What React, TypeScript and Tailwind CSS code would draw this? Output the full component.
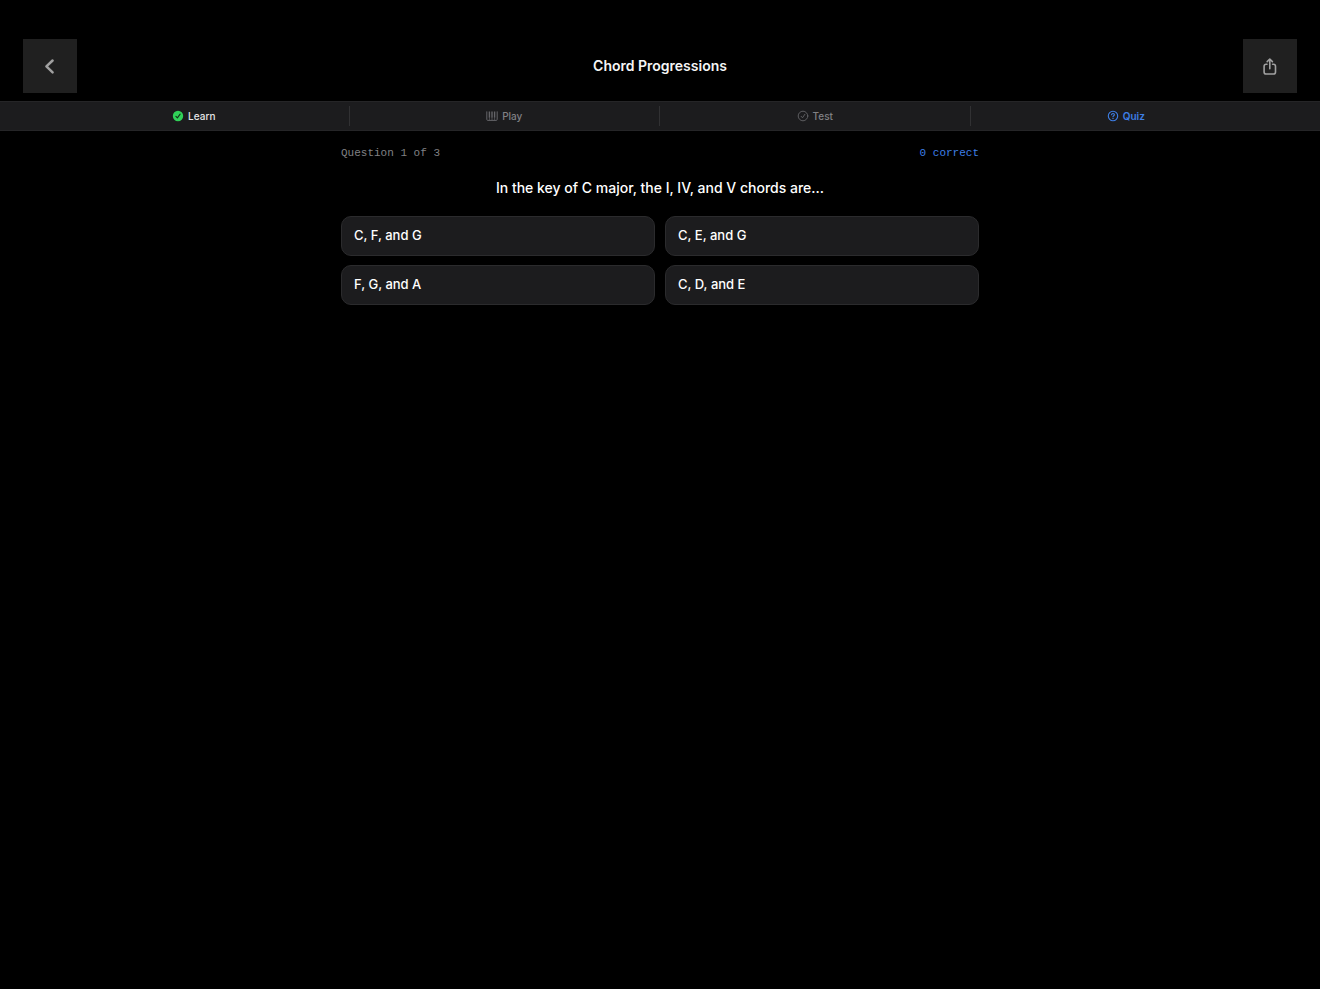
import { useState } from "react";
import type { ReactNode } from "react";
import clsx from "clsx";

interface Tab {
  label: string;
  icon: ReactNode;
  className: string;
}

function CheckFilledIcon() {
  return (
    <svg viewBox="0 0 12 12" className="h-3 w-3" aria-hidden="true">
      <circle cx="6" cy="6" r="5.2" fill="#30d158" />
      <path
        d="M3.9 6.3 5.4 7.9 8.1 4.1"
        fill="none"
        stroke="#12301a"
        strokeWidth="1.1"
        strokeLinecap="round"
        strokeLinejoin="round"
      />
    </svg>
  );
}

function PianoIcon() {
  return (
    <svg
      viewBox="0 0 12 12"
      className="h-3 w-3"
      fill="none"
      stroke="currentColor"
      aria-hidden="true"
    >
      <path
        d="M.8 1.4V9.4Q.8 10.4 1.8 10.4H10.2Q11.2 10.4 11.2 9.4V1.4"
        strokeWidth="1"
      />
      <path d="M3.4 1.4V7.8M6 1.4V7.8M8.6 1.4V7.8" strokeWidth="1.4" />
      <path d="M3.4 7.8V10.4M6 7.8V10.4M8.6 7.8V10.4" strokeWidth="0.7" />
    </svg>
  );
}

function CheckCircleIcon() {
  return (
    <svg
      viewBox="0 0 12 12"
      className="h-3 w-3"
      fill="none"
      stroke="currentColor"
      strokeLinecap="round"
      strokeLinejoin="round"
      aria-hidden="true"
    >
      <circle cx="6" cy="6" r="4.8" strokeWidth="0.9" />
      <path d="M4.1 6.3 5.5 7.8 7.9 4.3" strokeWidth="0.9" />
    </svg>
  );
}

function QuestionCircleIcon() {
  return (
    <svg
      viewBox="0 0 12 12"
      className="h-3 w-3"
      fill="none"
      stroke="currentColor"
      strokeLinecap="round"
      strokeLinejoin="round"
      aria-hidden="true"
    >
      <circle cx="6" cy="6" r="4.7" strokeWidth="1.1" />
      <path
        d="M4.6 4.8C4.6 3.1 7.4 3.1 7.4 4.8 7.4 5.8 6 5.8 6 6.8"
        strokeWidth="1.1"
      />
      <circle cx="6" cy="8.4" r="0.7" fill="currentColor" stroke="none" />
    </svg>
  );
}

const tabs: Tab[] = [
  { label: "Learn", icon: <CheckFilledIcon />, className: "text-[#e5e5e7]" },
  { label: "Play", icon: <PianoIcon />, className: "text-[#808084]" },
  { label: "Test", icon: <CheckCircleIcon />, className: "text-[#808084]" },
  {
    label: "Quiz",
    icon: <QuestionCircleIcon />,
    className: "text-[#3e7fe6] font-semibold",
  },
];

const answers = ["C, F, and G", "C, E, and G", "F, G, and A", "C, D, and E"];

function Header() {
  return (
    <header className="flex items-center justify-between px-[23px] pt-[39px] pb-2">
      <button
        aria-label="Back"
        className="flex size-[54px] items-center justify-center bg-[#202020] text-[#a0a0a0]"
      >
        <svg
          viewBox="0 0 20 20"
          className="size-5"
          fill="none"
          stroke="currentColor"
          strokeWidth="2.5"
          strokeLinecap="round"
          strokeLinejoin="round"
        >
          <path d="M12.6 4.5 6.4 10.4 12.6 16.3" />
        </svg>
      </button>
      <h1 className="text-sm font-semibold text-[#f5f5f5]">
        Chord Progressions
      </h1>
      <button
        aria-label="Share"
        className="flex size-[54px] items-center justify-center bg-[#202020] text-[#a0a0a0]"
      >
        <svg
          viewBox="0 0 20 20"
          className="size-5"
          fill="none"
          stroke="currentColor"
          strokeWidth="1.6"
          strokeLinecap="round"
          strokeLinejoin="round"
        >
          <path d="M7 8.2H6.2Q4.1 8.2 4.1 10.3V15.9Q4.1 18 6.2 18H13.4Q15.5 18 15.5 15.9V10.3Q15.5 8.2 13.4 8.2H12.6" />
          <path d="M9.8 12.8V3.2M7.2 5.6 9.8 3 12.4 5.6" />
        </svg>
      </button>
    </header>
  );
}

function TabBar() {
  const [active, setActive] = useState("Quiz");

  return (
    <nav className="flex border-y border-[#252527] bg-[#1c1c1e] px-[39px]">
      {tabs.map((tab, i) => (
        <div key={tab.label} className="flex flex-1 items-center">
          <button
            aria-current={active === tab.label ? "page" : undefined}
            onClick={() => setActive(tab.label)}
            className={clsx(
              "flex h-[28px] flex-1 items-center justify-center gap-1 text-[10px] font-medium",
              tab.className
            )}
          >
            <span className={clsx(i === 1 || i === 2 ? "text-[#646468]" : "")}>
              {tab.icon}
            </span>
            {tab.label}
          </button>
          {i < tabs.length - 1 && <div className="h-5 w-px bg-[#313133]" />}
        </div>
      ))}
    </nav>
  );
}

export default function App() {
  const [selected, setSelected] = useState<string | null>(null);

  return (
    <div className="min-h-screen bg-black font-['Inter',sans-serif] text-white">
      <Header />
      <TabBar />
      <main className="mx-auto max-w-[638px] pt-3.5">
        <div className="flex justify-between font-['Liberation_Mono',monospace] text-[11px] leading-4">
          <span className="text-[#808084]">Question 1 of 3</span>
          <span className="text-[#3e7fe6]">0 correct</span>
        </div>
        <h2 className="mt-[17px] text-center text-sm font-medium">
          In the key of C major, the I, IV, and V chords are...
        </h2>
        <div className="mt-[18px] grid grid-cols-2 gap-x-[10px] gap-y-[9px]">
          {answers.map((answer) => (
            <button
              key={answer}
              onClick={() => setSelected(answer)}
              aria-pressed={selected === answer}
              className="h-10 rounded-[10px] border border-[#2b2b2d] bg-[#1c1c1e] px-3 text-left text-[13px] font-medium"
            >
              {answer}
            </button>
          ))}
        </div>
      </main>
    </div>
  );
}
